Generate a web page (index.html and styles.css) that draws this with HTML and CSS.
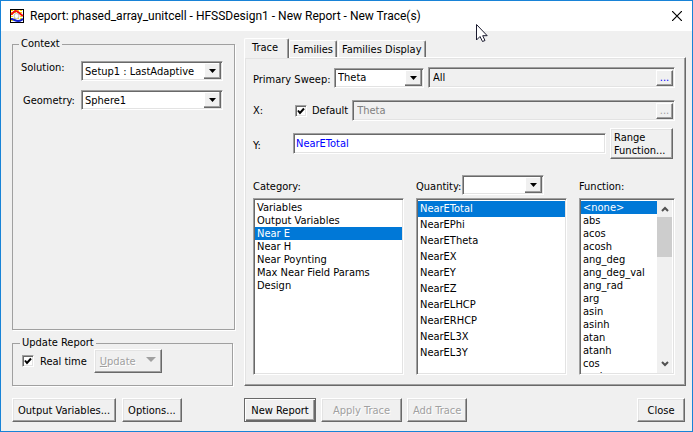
FILE: index.html
```html
<!DOCTYPE html>
<html lang="en">
<head>
    <meta charset="UTF-8">
    <meta name="viewport" content="width=device-width, initial-scale=1.0">
    <title>Report: phased_array_unitcell</title>
    <link rel="stylesheet" href="styles.css">
</head>
<body>
    <div class="dialog">
        <header class="titlebar">
            <svg class="logo" width="14" height="14" viewBox="0 0 14 14">
                <rect x=".5" y=".5" width="13" height="13" fill="#fff" stroke="#000"/>
                <path d="M1 1.500h12M1 3.500h12M1 5.500h12M1 7.500h12M1 9.500h12M1 11.500h12" stroke="#ffe800" stroke-dasharray="2 1"/>
                <path d="M1 5.500C3 4 4 2 6 2s4 3 7 5" fill="none" stroke="#f01010" stroke-width="2"/>
                <path d="M1 10c3 0 4 2 7 2s3-1 5-2" fill="none" stroke="#1020d0" stroke-width="2"/>
                <circle cx="6.500" cy="7" r="2.500" fill="#fff" stroke="#c0c0c0"/>
            </svg>
            <h1>Report: phased_array_unitcell - HFSSDesign1 - New Report - New Trace(s)</h1>
            <button class="close" aria-label="Close window">
                <svg width="10" height="10" viewBox="0 0 10 10"><path d="M0 0l10 10M10 0L0 10" stroke="#000" stroke-width="1.2"/></svg>
            </button>
        </header>
        <svg class="cursor" width="13" height="20" viewBox="0 0 13 20">
            <path d="M1.500 1.500v15.500l3.500-3.500 2.500 5 2.500-1-2.300-4.800h4.500z" fill="#fff" stroke="#1a1a2e"/>
        </svg>

        <main class="main">
            <div class="side">
                <fieldset class="context">
                    <legend>Context</legend>
                    <div class="context-row">
                        <label for="solution">Solution:</label>
                        <select id="solution" class="combo"><option>Setup1 : LastAdaptive</option></select>
                    </div>
                    <div class="context-row indent">
                        <label for="geometry">Geometry:</label>
                        <select id="geometry" class="combo"><option>Sphere1</option></select>
                    </div>
                </fieldset>
                <fieldset class="update">
                    <legend>Update Report</legend>
                    <input type="checkbox" id="realtime" class="check" checked>
                    <label for="realtime">Real time</label>
                    <button class="btn update-btn" disabled><span><u>U</u>pdate</span>
                        <svg width="10" height="5" viewBox="0 0 10 5"><path d="M0 0h10L5 5z" fill="#a0a0a0"/></svg>
                    </button>
                </fieldset>
            </div>

            <div class="content">
                <div class="tabs" role="tablist">
                    <button class="tab active" role="tab" aria-selected="true">Trace</button>
                    <button class="tab" role="tab">Families</button>
                    <button class="tab" role="tab">Families Display</button>
                </div>
                <div class="panel">
                    <div class="row sweep">
                        <label for="sweep">Primary Sweep:</label>
                        <select id="sweep" class="combo"><option>Theta</option></select>
                        <div class="field">
                            <input type="text" value="All" aria-label="Sweep values" readonly>
                            <button class="more" aria-label="Edit sweep">...</button>
                        </div>
                    </div>
                    <div class="row xrow">
                        <label class="axis" for="xvalue">X:</label>
                        <input type="checkbox" id="default" class="check" checked>
                        <label for="default">Default</label>
                        <div class="field">
                            <input type="text" id="xvalue" value="Theta" disabled>
                            <button class="more" aria-label="Edit X" disabled>...</button>
                        </div>
                    </div>
                    <div class="row yrow">
                        <label class="axis" for="yvalue">Y:</label>
                        <input type="text" id="yvalue" class="yvalue" value="NearETotal">
                        <button class="btn range">Range<br>Function...</button>
                    </div>
                    <div class="lists">
                        <div class="col">
                            <div class="head"><label for="category">Category:</label></div>
                            <div class="box">
                                <select id="category" class="list" size="12">
                                    <option>Variables</option>
                                    <option>Output Variables</option>
                                    <option selected>Near E</option>
                                    <option>Near H</option>
                                    <option>Near Poynting</option>
                                    <option>Max Near Field Params</option>
                                    <option>Design</option>
                                </select>
                            </div>
                        </div>
                        <div class="col">
                            <div class="head">
                                <label for="quantity">Quantity:</label>
                                <select class="combo filter" aria-label="Quantity filter"><option></option></select>
                            </div>
                            <div class="box">
                                <select id="quantity" class="list tall" size="10">
                                    <option selected>NearETotal</option>
                                    <option>NearEPhi</option>
                                    <option>NearETheta</option>
                                    <option>NearEX</option>
                                    <option>NearEY</option>
                                    <option>NearEZ</option>
                                    <option>NearELHCP</option>
                                    <option>NearERHCP</option>
                                    <option>NearEL3X</option>
                                    <option>NearEL3Y</option>
                                </select>
                            </div>
                        </div>
                        <div class="col">
                            <div class="head"><label for="function">Function:</label></div>
                            <div class="box">
                                <select id="function" class="list" size="14">
                                    <option selected>&lt;none&gt;</option>
                                    <option>abs</option>
                                    <option>acos</option>
                                    <option>acosh</option>
                                    <option>ang_deg</option>
                                    <option>ang_deg_val</option>
                                    <option>ang_rad</option>
                                    <option>arg</option>
                                    <option>asin</option>
                                    <option>asinh</option>
                                    <option>atan</option>
                                    <option>atanh</option>
                                    <option>cos</option>
                                    <option>cosh</option>
                                </select>
                                <div class="scroll">
                                    <svg width="8" height="6" viewBox="0 0 8 6"><path d="M1 5l3-3 3 3" fill="none" stroke="#505050" stroke-width="2"/></svg>
                                    <div class="thumb"></div>
                                    <svg width="8" height="6" viewBox="0 0 8 6"><path d="M1 1l3 3 3-3" fill="none" stroke="#505050" stroke-width="2"/></svg>
                                </div>
                            </div>
                        </div>
                    </div>
                </div>
            </div>
        </main>

        <footer class="footer">
            <div class="side-buttons">
                <button class="btn">Output Variables...</button>
                <button class="btn">Options...</button>
            </div>
            <button class="btn primary">New Report</button>
            <button class="btn apply" disabled>Apply Trace</button>
            <button class="btn" disabled>Add Trace</button>
            <button class="btn last">Close</button>
        </footer>
    </div>
</body>
</html>
```
FILE: styles.css
```css
*{
    margin: 0;
    padding: 0;
    box-sizing: border-box;
}
body, button, input, select{
    font-family: "DejaVu Sans Condensed", "DejaVu Sans", sans-serif;
    font-size: 11px;
    color: #000;
}
.dialog{
    display: flex;
    flex-direction: column;
    min-height: 100vh;
    background: #f0f0f0;
    border: 1px solid #1883d7;
    position: relative;
}
.titlebar{
    display: flex;
    align-items: center;
    height: 30px;
    padding: 0 10px 0 9px;
    background: #fff;
}
.titlebar h1{
    flex: 1;
    margin-left: 6px;
    font-family: Roboto, sans-serif;
    font-size: 12px;
    font-weight: 400;
    white-space: nowrap;
}
.close{
    display: flex;
    border: none;
    background: none;
}
.cursor{
    position: absolute;
    left: 474px;
    top: 22px;
}
.main{
    flex: 1;
    display: flex;
    gap: 9px;
    padding: 7px 6px 0 11px;
}
.side{
    width: 223px;
    display: flex;
    flex-direction: column;
    gap: 7px;
}
fieldset{
    border: 1px solid #a0a0a0;
    box-shadow: 1px 1px 0 #fff;
}
legend{
    margin-left: -2px;
    padding: 0 2px;
    line-height: 12px;
}
.context{
    flex: 1;
    padding: 11px 11px 0 8px;
}
.context-row{
    display: flex;
    justify-content: space-between;
    margin-bottom: 9px;
}
.indent label{
    padding: 4px 0 0 2px;
}
.context-row .combo{
    width: 142px;
}
.update{
    display: flex;
    align-items: center;
    height: 49px;
    margin-right: 2px;
    padding: 0 9px 4px;
}
.update label{
    margin-left: 6px;
}
.update-btn{
    display: inline-flex;
    align-items: center;
    justify-content: space-between;
    width: 68px;
    margin-left: 7px;
    padding: 0 5px 0 7px;
}
.update-btn svg{
    margin-bottom: 4px;
}

/* controls */
.combo, .field, .yvalue, .box, .check{
    border: 1px solid;
    border-color: #a0a0a0 #fff #fff #a0a0a0;
    box-shadow: inset 1px 1px 0 #696969, inset -1px -1px 0 #e3e3e3;
}
.combo{
    appearance: none;
    height: 20px;
    padding: 0 20px 0 3px;
    border-radius: 0;
    background: #fff url("data:image/svg+xml,%3Csvg xmlns='http://www.w3.org/2000/svg' width='17' height='16'%3E%3Cpath d='M0 0h17v16H0z' fill='%23696969'/%3E%3Cpath d='M0 0h16v15H0z' fill='%23a0a0a0'/%3E%3Cpath d='M0 0h15v14H0z' fill='%23fff'/%3E%3Cpath d='M1 1h14v13H1z' fill='%23f0f0f0'/%3E%3Cpath d='M5 6h7L8.500 10z'/%3E%3C/svg%3E") no-repeat right 1px center;
}
.check{
    appearance: none;
    width: 12px;
    height: 12px;
    background: #fff url("data:image/svg+xml,%3Csvg xmlns='http://www.w3.org/2000/svg' width='8' height='8'%3E%3Cpath d='M1 3.500l2 2.500L7 1.500' fill='none' stroke='%23000' stroke-width='2'/%3E%3C/svg%3E") no-repeat center;
}
.btn{
    height: 24px;
    padding: 0 5px;
    border: 1px solid;
    border-color: #fff #696969 #696969 #fff;
    background: #f0f0f0;
    box-shadow: inset -1px -1px 0 #a0a0a0, inset 1px 1px 0 #e3e3e3;
    white-space: nowrap;
}
.btn:disabled{
    color: #a0a0a0;
    text-shadow: 1px 1px 0 #fff;
}
.field{
    flex: 1;
    display: flex;
    align-items: center;
    height: 21px;
    padding: 1px;
}
.field input{
    flex: 1;
    min-width: 0;
    padding-left: 3px;
    border: none;
    background: none;
}
.field input:disabled{
    color: #808080;
}
.more{
    width: 17px;
    height: 16px;
    border: 1px solid;
    border-color: #fff #696969 #696969 #fff;
    box-shadow: inset -1px -1px 0 #a0a0a0;
    background: #f0f0f0;
    color: #00f;
    line-height: 8px;
}
.more:disabled{
    color: #a0a0a0;
}

/* tabs */
.content{
    flex: 1;
    min-width: 0;
    display: flex;
    flex-direction: column;
}
.tabs{
    display: flex;
    align-items: flex-end;
    height: 19px;
}
.tab{
    height: 17px;
    margin-right: 1px;
    padding: 0 3px;
    border: 1px solid;
    border-color: #fff #696969 transparent #fff;
    border-bottom: none;
    border-radius: 2px 2px 0 0;
    background: #f0f0f0;
    box-shadow: inset -1px 0 0 #a0a0a0;
}
.tab.active{
    height: 20px;
    margin: 0 0 -1px;
    padding: 0 10px 2px 7px;
    z-index: 1;
}
.panel{
    flex: 1;
    display: flex;
    flex-direction: column;
    padding: 9px 10px 10px 8px;
    border: 1px solid;
    border-color: #fff #696969 #696969 #fff;
    box-shadow: inset -1px -1px 0 #a0a0a0, inset 1px 1px 0 #e3e3e3;
}
.row{
    display: flex;
    align-items: center;
}
.sweep label{
    width: 81px;
    padding-top: 3px;
    white-space: nowrap;
}
.sweep .combo{
    width: 90px;
    margin-right: 4px;
}
.xrow{
    margin-top: 12px;
}
.axis{
    width: 42px;
}
.xrow .check{
    margin-right: 5px;
}
.xrow .field{
    margin-left: 4px;
}
.yrow{
    margin-top: 7px;
}
.yrow .axis{
    width: 40px;
    padding-top: 4px;
}
.yvalue{
    flex: 1;
    min-width: 0;
    height: 21px;
    padding: 0 2px;
    background: #fff;
    color: #00f;
}
.range{
    width: 63px;
    height: 31px;
    margin: 0 2px 0 4px;
    padding: 0 3px;
    line-height: 13px;
    text-align: left;
}

/* lists */
.lists{
    flex: 1;
    display: grid;
    grid-template-columns: 151fr 151fr 96fr;
    gap: 12px;
    margin-top: 16px;
}
.col{
    display: flex;
    flex-direction: column;
}
.head{
    display: flex;
    justify-content: space-between;
    align-items: center;
    height: 20px;
    margin-bottom: 3px;
    padding-right: 23px;
    white-space: nowrap;
}
.head label{
    padding-top: 3px;
}
.filter{
    width: 82px;
}
.box{
    flex: 1 0 177px;
    height: 177px;
    display: flex;
    padding: 1px;
    background: #fff;
}
.list{
    flex: 1;
    min-width: 0;
    height: 173px;
    padding-top: 1px;
    border: none;
    outline: none;
    overflow: hidden;
    background: none;
}
.list option{
    height: 13px;
    min-height: 13px;
    padding: 0 2px;
    line-height: 13px;
    color: #000;
}
.list.tall option{
    height: 16px;
    padding-top: 1px;
    line-height: 15px;
}
.list option:checked{
    background: #0078d7 linear-gradient(#0078d7, #0078d7);
    color: #fff;
}
.scroll{
    width: 15px;
    display: flex;
    flex-direction: column;
    align-items: center;
    margin-right: 1px;
    padding: 6px 0;
    background: #f0f0f0;
}
.thumb{
    width: 15px;
    height: 40px;
    margin: 5px 0 auto;
    background: #cdcdcd;
}

/* bottom buttons */
.footer{
    display: flex;
    gap: 5px;
    padding: 12px 7px 9px 11px;
}
.side-buttons{
    display: flex;
    gap: 6px;
    width: 227px;
}
.primary{
    width: 72px;
    border-color: #696969;
    box-shadow: inset 1px 1px 0 #fff, inset -1px -1px 0 #696969, inset -2px -2px 0 #a0a0a0;
}
.apply{
    width: 81px;
}
.last{
    width: 48px;
    margin-left: auto;
}
```
